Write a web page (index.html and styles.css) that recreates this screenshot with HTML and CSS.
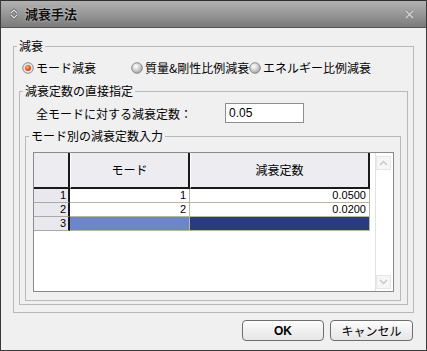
FILE: index.html
```html
<!DOCTYPE html>
<html lang="ja">
<head>
<meta charset="utf-8">
<title>減衰手法</title>
<link rel="stylesheet" href="styles.css">
</head>
<body>
<svg class="defs" width="0" height="0" aria-hidden="true">
  <defs>
    <radialGradient id="rgOff" cx="40%" cy="35%" r="70%">
      <stop offset="0" stop-color="#ffffff"/>
      <stop offset="0.45" stop-color="#d8d8d8"/>
      <stop offset="1" stop-color="#9a9a9a"/>
    </radialGradient>
    <radialGradient id="rgOn" cx="40%" cy="35%" r="70%">
      <stop offset="0" stop-color="#ffc090"/>
      <stop offset="0.5" stop-color="#f2642a"/>
      <stop offset="1" stop-color="#c23a10"/>
    </radialGradient>
  </defs>
</svg>
<div class="window">
  <div class="titlebar">
    <svg class="ticon" width="10" height="12" viewBox="0 0 10 12">
      <path d="M2 5 L5 2 L8 5 M2 7 L5 10 L8 7" fill="none" stroke="#5a5a5a" stroke-width="2.6" stroke-linejoin="round"/>
      <path d="M2 5 L5 2 L8 5 M2 7 L5 10 L8 7" fill="none" stroke="#e6e6e6" stroke-width="1.2"/>
    </svg>
    <span class="ttext">減衰手法</span>
    <svg class="tclose" width="13" height="11" viewBox="0 0 13 11">
      <path d="M3 2 L10 9 M10 2 L3 9" fill="none" stroke="#8a8a8a" stroke-width="3"/>
      <path d="M3 2 L10 9 M10 2 L3 9" fill="none" stroke="#d4d4d4" stroke-width="1.4"/>
    </svg>
  </div>
  <div class="body">
    <fieldset class="g1">
      <legend>減衰</legend>
      <div class="radios">
        <label class="ropt r1">
          <svg class="radio" width="12" height="12" viewBox="0 0 12 12"><circle cx="6" cy="6" r="5.3" fill="#e4e4e4" stroke="#8c8c8c"/><circle cx="6" cy="6" r="3" fill="url(#rgOn)"/></svg>
          <span>モード減衰</span>
        </label>
        <label class="ropt r2">
          <svg class="radio" width="12" height="12" viewBox="0 0 12 12"><circle cx="6" cy="6" r="5.3" fill="url(#rgOff)" stroke="#8c8c8c"/></svg>
          <span>質量&amp;剛性比例減衰</span>
        </label>
        <label class="ropt r3">
          <svg class="radio" width="12" height="12" viewBox="0 0 12 12"><circle cx="6" cy="6" r="5.3" fill="url(#rgOff)" stroke="#8c8c8c"/></svg>
          <span>エネルギー比例減衰</span>
        </label>
      </div>
      <fieldset class="g2">
        <legend>減衰定数の直接指定</legend>
        <div class="allrow">
          <span class="lbl">全モードに対する減衰定数：</span>
          <div class="input">0.05</div>
        </div>
        <fieldset class="g3">
          <legend>モード別の減衰定数入力</legend>
          <div class="grid">
            <div class="gtable">
              <div class="hc corner"></div>
              <div class="hc">モード</div>
              <div class="hc">減衰定数</div>

              <div class="rh">1</div>
              <div class="dc">1</div>
              <div class="dc">0.0500</div>

              <div class="rh">2</div>
              <div class="dc">2</div>
              <div class="dc">0.0200</div>

              <div class="rh">3</div>
              <div class="dc sel1"></div>
              <div class="dc sel2"></div>
            </div>
            <div class="vscroll">
              <div class="sbtn">
                <svg width="9" height="6" viewBox="0 0 9 6"><path d="M1 5 L4.5 1.5 L8 5" fill="none" stroke="#c3cad2" stroke-width="1.5"/></svg>
              </div>
              <div class="sbtn">
                <svg width="9" height="6" viewBox="0 0 9 6"><path d="M1 1 L4.5 4.5 L8 1" fill="none" stroke="#c3cad2" stroke-width="1.5"/></svg>
              </div>
            </div>
          </div>
        </fieldset>
      </fieldset>
    </fieldset>
    <div class="btns">
      <div class="btn ok">OK</div>
      <div class="btn cancel">キャンセル</div>
    </div>
  </div>
</div>
</body>
</html>
```

FILE: styles.css
```css
* { box-sizing: border-box; }
html, body { margin: 0; padding: 0; }
body {
  font-family: "Noto Sans CJK JP", "Noto Sans", sans-serif;
  font-size: 12px;
  color: #000;
  background: #ffffff;
}
.defs { position: absolute; width: 0; height: 0; }

.window {
  width: 427px;
  height: 351px;
  display: flex;
  flex-direction: column;
  background: #f0f0f0;
  border: 1px solid #3a3a3a;
  border-top: none;
}

.titlebar {
  height: 28px;
  flex: none;
  display: flex;
  align-items: center;
  padding-left: 8px;
  background: linear-gradient(#b2b2b2, #9a9a9a 45%, #7a7a7a);
  border-top: 1px solid #2e2e2e;
  border-bottom: 1px solid #555555;
}
.ticon { flex: none; }
.ttext {
  margin-left: 6px;
  font-size: 13px;
  font-weight: bold;
  color: #111;
  line-height: 16px;
  text-shadow: 0 0 2px rgba(255, 255, 255, 0.75);
}
.tclose { margin-left: auto; margin-right: 10px; }

.body {
  flex: 1;
  padding: 11px 12px 0 12px;
}

fieldset {
  margin: 0;
  min-width: 0;
  border: 1px solid #b9b9b9;
}
legend {
  padding: 0 2px;
  height: 14px;
  line-height: 14px;
  font-size: 12px;
}

.g1 { padding: 8px 5px 7px 5px; }
.g1 > legend { margin-left: -2px; }
.g2 { margin-top: 9px; padding: 5px 6px 3px 5px; }
.g2 > legend { margin-left: -2px; }
.g3 { margin-top: 6px; padding: 9px 6px 8px 7px; }
.g3 > legend { margin-left: -4px; }

.radios {
  display: flex;
  align-items: center;
  height: 14px;
  margin-left: 3px;
}
.ropt {
  display: flex;
  align-items: center;
  gap: 2px;
  white-space: nowrap;
  line-height: 14px;
}
.ropt.r1 { width: 109px; }
.ropt.r2 { width: 118px; }
.radio { flex: none; }

.allrow {
  display: flex;
  align-items: center;
  height: 20px;
}
.lbl {
  width: 189px;
  margin-left: 11px;
  white-space: nowrap;
}
.input {
  width: 79px;
  height: 20px;
  border: 1px solid #8e8e8e;
  background: #fff;
  padding-left: 3px;
  line-height: 18px;
  font-family: "Liberation Sans", "Noto Sans", sans-serif;
}

.grid {
  height: 140px;
  border: 1px solid #8a8a8a;
  background: #fff;
  display: flex;
}
.gtable {
  display: grid;
  grid-template-columns: 36px 120px 180px;
  grid-template-rows: 36px 14px 14px 14px;
  align-content: start;
}
.hc {
  background: #ececf1;
  border-right: 2px solid #1a1a1a;
  border-bottom: 2px solid #1a1a1a;
  border-left: 1px solid #ffffff;
  display: flex;
  align-items: center;
  justify-content: center;
  line-height: 14px;
}
.hc.corner { border-left: none; }
.rh, .dc {
  font-family: "Liberation Sans", "Noto Sans", sans-serif;
  font-size: 11px;
  line-height: 13px;
  height: 14px;
  text-align: right;
}
.rh {
  background: #e8e8ee;
  border-right: 2px solid #1a1a1a;
  border-bottom: 1px solid #a9a9a9;
  padding-right: 2px;
}
.dc {
  border-right: 1px solid #b9b7a4;
  border-bottom: 1px solid #b9b7a4;
  padding-right: 3px;
}
.dc.sel1 { background: #6c86c8; }
.dc.sel2 { background: #2b3b80; }

.vscroll {
  margin-left: auto;
  width: 18px;
  border-left: 1px solid #e2e2e2;
  display: flex;
  flex-direction: column;
  justify-content: space-between;
  padding: 3px 2px 2px 0;
}
.sbtn {
  height: 14px;
  background: #f6f6f6;
  border: 1px solid #e4e6e8;
  display: flex;
  align-items: center;
  justify-content: center;
}

.btns {
  display: flex;
  justify-content: flex-end;
  gap: 6px;
  margin-top: 7px;
  padding-right: 1px;
}
.btn {
  height: 21px;
  border: 1px solid #6e6e6e;
  border-radius: 4px;
  background: linear-gradient(#fefefe, #f0f0f0 50%, #e6e6e6);
  display: flex;
  align-items: center;
  justify-content: center;
  line-height: 14px;
}
.btn.ok { width: 82px; font-weight: bold; font-family: "Liberation Sans", "Noto Sans", sans-serif; }
.btn.cancel { width: 83px; }
```
